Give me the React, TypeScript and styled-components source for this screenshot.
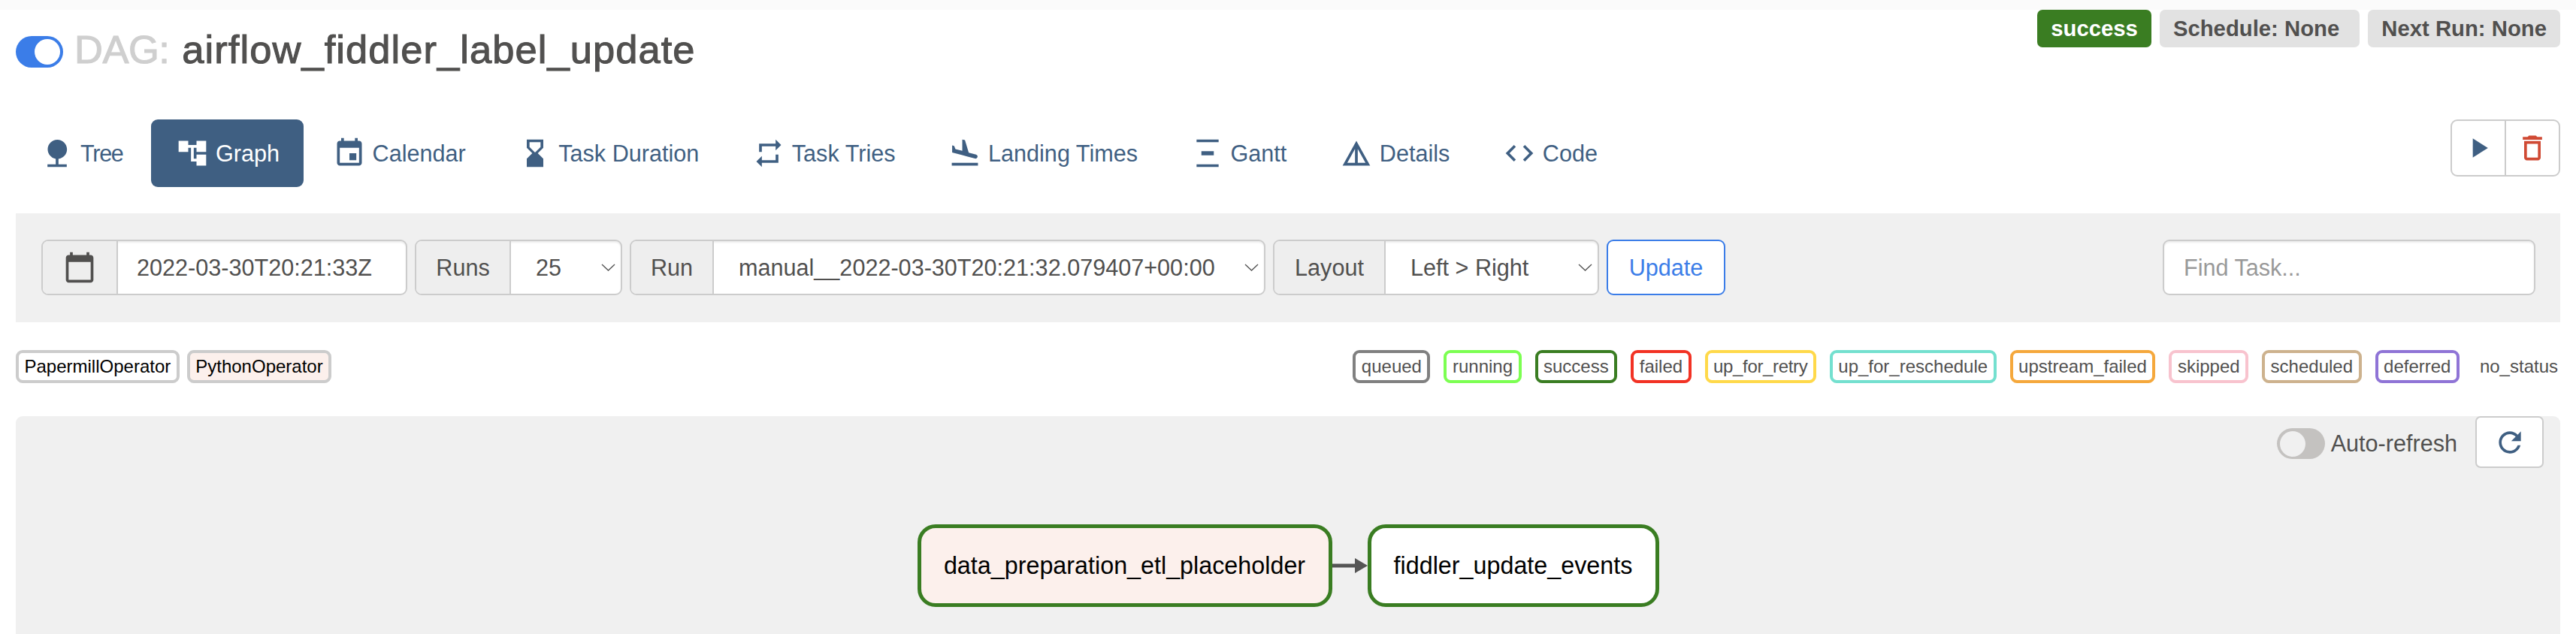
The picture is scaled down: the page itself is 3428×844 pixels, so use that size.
import React from "react";
import styled, { createGlobalStyle } from "styled-components";

const ink = "#51504f";
const navy = "#3f5f82";

const GlobalStyle = createGlobalStyle`
  html, body {
    margin: 0;
    background: #fff;
  }
  body {
    width: 3428px;
    height: 844px;
    overflow: hidden;
    font-family: "Liberation Sans", Arial, sans-serif;
    font-size: 30.6px;
    color: ${ink};
  }
`;

const Page = styled.div`
  height: 844px;
  padding: 13px 21px 0;
  box-sizing: border-box;
  display: flex;
  flex-direction: column;
  overflow: hidden;
`;

const TopStrip = styled.div`
  position: absolute;
  top: 0;
  left: 0;
  width: 100%;
  height: 13px;
  background: #fbfbfb;
`;

const Header = styled.header`
  display: flex;
  justify-content: space-between;
  align-items: flex-start;
  height: 146px;
`;

const TitleRow = styled.div`
  display: flex;
  align-items: center;
  margin-top: 35px;
  height: 42px;
`;

const Switch = styled.span<{ $on?: boolean }>`
  width: ${({ $on }) => ($on ? 63 : 64)}px;
  height: ${({ $on }) => ($on ? 42 : 41)}px;
  flex: none;
  border-radius: 21px;
  background: ${({ $on }) => ($on ? "#3b7de8" : "#c4c2c0")};
  display: flex;
  align-items: center;
  justify-content: ${({ $on }) => ($on ? "flex-end" : "flex-start")};
  padding: 0 4px;
  box-sizing: border-box;

  &::after {
    content: "";
    width: 34px;
    height: 34px;
    border-radius: 50%;
    background: ${({ $on }) => ($on ? "#fff" : "#f0f0f0")};
  }
`;

const Title = styled.h4`
  margin: -6px 0 0 15px;
  font-size: 52.5px;
  font-weight: 400;
  line-height: 1;
  white-space: nowrap;
  letter-spacing: 1.05px;
  -webkit-text-stroke: 1.1px currentColor;
`;

const DagWord = styled.span`
  color: #cfcfcf;
  margin-right: 17px;
  letter-spacing: -0.5px;
`;

const Badges = styled.div`
  display: flex;
  gap: 11px;
`;

const Badge = styled.span<{ $success?: boolean; $trail?: number }>`
  height: 50px;
  padding: 0 ${({ $trail }) => 18 + ($trail ?? 0)}px 0 18px;
  display: flex;
  align-items: center;
  border-radius: 7px;
  font-size: 29.3px;
  font-weight: 700;
  background: ${({ $success }) => ($success ? "#3a7d22" : "#e2e2e2")};
  color: ${({ $success }) => ($success ? "#fff" : ink)};
`;

const NavRow = styled.nav`
  display: flex;
  justify-content: space-between;
  align-items: flex-start;
  height: 125px;
`;

const Tabs = styled.ul`
  display: flex;
  gap: 5.5px;
  margin: 0;
  padding: 0;
  list-style: none;
`;

const Tab = styled.li<{ $active?: boolean; $tight?: boolean }>`
  height: 90px;
  padding: 0 32px 0 33px;
  display: flex;
  align-items: center;
  gap: 9px;
  border-radius: 9px;
  white-space: nowrap;
  letter-spacing: ${({ $tight }) => ($tight ? "-1.3px" : "normal")};
  background: ${({ $active }) => ($active ? navy : "transparent")};
  color: ${({ $active }) => ($active ? "#fff" : navy)};
`;

const IconSvg = styled.svg<{ $size?: number }>`
  width: ${({ $size }) => $size ?? 44}px;
  height: ${({ $size }) => $size ?? 44}px;
  flex: none;
  fill: currentColor;
`;

const Icon = ({ d, size }: { d: string; size?: number }) => (
  <IconSvg viewBox="0 0 24 24" $size={size} aria-hidden="true">
    <path d={d} />
  </IconSvg>
);

const ActionGroup = styled.div`
  display: flex;
  height: 76px;
  border: 2px solid #ccc;
  border-radius: 9px;
  box-sizing: border-box;
  background: #fff;
`;

const ActionButton = styled.span<{ $danger?: boolean }>`
  width: 70px;
  display: flex;
  align-items: center;
  justify-content: center;
  color: ${({ $danger }) => ($danger ? "#d04a34" : navy)};

  & + & {
    border-left: 2px solid #ccc;
  }
`;

const FilterPanel = styled.section`
  height: 145px;
  padding: 35px 33px 0 34px;
  box-sizing: border-box;
  background: #f0f0f0;
  display: flex;
  justify-content: space-between;
`;

const Controls = styled.div`
  display: flex;
  gap: 10px;
`;

const InputGroup = styled.div<{ $width: number }>`
  width: ${({ $width }) => $width}px;
  height: 74px;
  box-sizing: border-box;
  display: flex;
  align-items: center;
  border: 2px solid #ccc;
  border-radius: 9px;
  background: #fff;
  box-shadow: inset 0 2px 2px rgba(0, 0, 0, 0.075);
  overflow: hidden;
`;

const Addon = styled.span<{ $width: number }>`
  width: ${({ $width }) => $width}px;
  height: 100%;
  flex: none;
  box-sizing: border-box;
  display: flex;
  align-items: center;
  justify-content: center;
  background: #eee;
  border-right: 2px solid #ccc;
`;

const FieldValue = styled.span<{ $pad: number }>`
  flex: 1;
  padding-left: ${({ $pad }) => $pad}px;
  white-space: nowrap;
`;

const Caret = styled.svg`
  width: 19px;
  height: 10px;
  flex: none;
  margin-right: 7px;
  fill: none;
  stroke: #555;
  stroke-width: 1.4;
`;

const SelectCaret = () => (
  <Caret viewBox="0 0 19 10" aria-hidden="true">
    <path d="M1 1l8.5 8L18 1" />
  </Caret>
);

const UpdateButton = styled.span`
  width: 158px;
  height: 74px;
  box-sizing: border-box;
  display: flex;
  align-items: center;
  justify-content: center;
  border: 2px solid #3b7de8;
  border-radius: 9px;
  background: #fff;
  color: #3b7de8;
`;

const FindTask = styled.div`
  width: 496px;
  height: 74px;
  box-sizing: border-box;
  padding-left: 26px;
  display: flex;
  align-items: center;
  border: 2px solid #ccc;
  border-radius: 9px;
  background: #fff;
  box-shadow: inset 0 2px 2px rgba(0, 0, 0, 0.075);
  color: #999;
`;

const LegendRow = styled.div`
  height: 125px;
  padding-top: 37px;
  box-sizing: border-box;
  display: flex;
  justify-content: space-between;
  align-items: flex-start;
`;

const LegendGroup = styled.div<{ $gap: number }>`
  display: flex;
  align-items: center;
  gap: ${({ $gap }) => $gap}px;
`;

const LegendItem = styled.span<{ $border?: string; $bg?: string; $dark?: boolean; $tight?: boolean }>`
  height: 44px;
  padding: 0 7.5px;
  box-sizing: border-box;
  display: flex;
  align-items: center;
  border: 4px solid ${({ $border }) => $border ?? "#ccc"};
  border-radius: 9px;
  font-size: 24px;
  letter-spacing: ${({ $tight }) => ($tight ? "-0.35px" : "normal")};
  background: ${({ $bg }) => $bg ?? "#fff"};
  color: ${({ $dark }) => ($dark ? "#000" : ink)};
`;

const PlainStatus = styled.span`
  font-size: 24px;
  margin: 0 3px 0 9px;
`;

const GraphPanel = styled.section`
  flex: 1;
  background: #f0f0f0;
  border-radius: 9px 9px 0 0;
  position: relative;
  display: flex;
  justify-content: center;
  padding: 144px 0 0 0;
  box-sizing: border-box;
`;

const RefreshBar = styled.div`
  position: absolute;
  top: 0;
  right: 22px;
  display: flex;
  align-items: flex-start;
`;

const AutoRefresh = styled.label`
  display: flex;
  align-items: center;
  gap: 8px;
  margin: 16px 24px 0 0;
`;

const RefreshButton = styled.span`
  width: 91px;
  height: 69px;
  box-sizing: border-box;
  display: flex;
  align-items: center;
  justify-content: center;
  border: 2px solid #ccc;
  border-radius: 7px;
  background: #fff;
  color: ${navy};
`;

const GraphRow = styled.div`
  display: flex;
  align-items: flex-start;
`;

const TaskNode = styled.div<{ $bg?: string; $width: number }>`
  width: ${({ $width }) => $width}px;
  height: 110px;
  box-sizing: border-box;
  display: flex;
  align-items: center;
  justify-content: center;
  border: 5px solid #3a7d22;
  border-radius: 24px;
  font-size: 32.3px;
  background: ${({ $bg }) => $bg ?? "#fff"};
  color: #000;
  white-space: nowrap;
`;

const EdgeArrow = styled.svg`
  width: 47px;
  height: 20px;
  flex: none;
  margin-top: 45px;
`;

const tabs = [
  { label: "Tree", tight: true, d: "M13 16.12c3.47-.41 6.17-3.36 6.17-6.95 0-3.87-3.13-7-7-7s-7 3.13-7 7c0 3.47 2.52 6.34 5.83 6.89V20H5v2h14v-2h-6v-3.88z" },
  { label: "Graph", active: true, d: "M22 11V3h-7v3H9V3H2v8h7V8h2v10h4v3h7v-8h-7v3h-2V8h2v3z" },
  { label: "Calendar", d: "M17 12h-5v5h5v-5zM16 1v2H8V1H6v2H5c-1.11 0-1.99.9-1.99 2L3 19c0 1.1.89 2 2 2h14c1.1 0 2-.9 2-2V5c0-1.1-.9-2-2-2h-1V1h-2zm3 18H5V8h14v11z" },
  { label: "Task Duration", d: "M18 22l-.01-6L14 12l3.99-4.01L18 2H6v6l4 4-4 3.99V22h12zM8 7.5V4h8v3.5l-4 4-4-4z" },
  { label: "Task Tries", d: "M7 7h10v3l4-4-4-4v3H5v6h2V7zm10 10H7v-3l-4 4 4 4v-3h12v-6h-2v4z" },
  { label: "Landing Times", d: "M2.5 19h19v2h-19v-2zm7.18-5.73l4.35 1.16 5.31 1.42c.8.21 1.62-.26 1.84-1.06.21-.8-.26-1.62-1.06-1.84l-5.31-1.42-2.76-9.02L10.12 2v8.28L5.15 8.95l-.93-2.32-1.45-.39v5.17l1.6.43 5.31 1.43z" },
  { label: "Gantt", d: "M4 2h16v2H4zM4 20h16v2H4zM7.5 10.5h9v3h-9z" },
  { label: "Details", d: "M12 3L2 21h20L12 3zm1 5.92L18.6 19H13V8.92zm-2 0V19H5.4L11 8.92z" },
  { label: "Code", d: "M9.4 16.6L4.8 12l4.6-4.6L8 6l-6 6 6 6 1.4-1.4zm5.2 0l4.6-4.6-4.6-4.6L16 6l6 6-6 6-1.4-1.4z" },
];

const statuses = [
  { label: "queued", color: "#808080" },
  { label: "running", color: "#7cff52" },
  { label: "success", color: "#3a7d22" },
  { label: "failed", color: "#f23224" },
  { label: "up_for_retry", color: "#ffd94a", tight: true },
  { label: "up_for_reschedule", color: "#74e0cf" },
  { label: "upstream_failed", color: "#f5a83c" },
  { label: "skipped", color: "#f8c3ce" },
  { label: "scheduled", color: "#cdb28e" },
  { label: "deferred", color: "#8f74d6" },
];

const CALENDAR = "M20 3h-1V1h-2v2H7V1H5v2H4c-1.1 0-2 .9-2 2v16c0 1.1.9 2 2 2h16c1.1 0 2-.9 2-2V5c0-1.1-.9-2-2-2zm0 18H4V8h16v13z";
const PLAY = "M8 5v14l11-7z";
const TRASH = "M6 19c0 1.1.9 2 2 2h8c1.1 0 2-.9 2-2V7H6v12zM8 9h8v10H8V9zm7.5-5l-1-1h-5l-1 1H5v2h14V4z";
const REFRESH = "M17.65 6.35C16.2 4.9 14.21 4 12 4c-4.42 0-7.99 3.58-7.99 8s3.57 8 7.99 8c3.73 0 6.84-2.55 7.73-6h-2.08c-.82 2.33-3.04 4-5.65 4-3.31 0-6-2.69-6-6s2.69-6 6-6c1.66 0 3.14.69 4.22 1.78L13 11h7V4l-2.35 2.35z";

export default function App() {
  return (
    <>
      <GlobalStyle />
      <TopStrip />
      <Page>
        <Header>
          <TitleRow>
            <Switch $on />
            <Title>
              <DagWord>DAG:</DagWord>
              airflow_fiddler_label_update
            </Title>
          </TitleRow>
          <Badges>
            <Badge $success>success</Badge>
            <Badge $trail={9}>Schedule: None</Badge>
            <Badge>Next Run: None</Badge>
          </Badges>
        </Header>

        <NavRow>
          <Tabs>
            {tabs.map((tab) => (
              <Tab key={tab.label} $active={tab.active} $tight={tab.tight}>
                <Icon d={tab.d} />
                {tab.label}
              </Tab>
            ))}
          </Tabs>
          <ActionGroup>
            <ActionButton>
              <Icon d={PLAY} />
            </ActionButton>
            <ActionButton $danger>
              <Icon d={TRASH} />
            </ActionButton>
          </ActionGroup>
        </NavRow>

        <FilterPanel>
          <Controls>
            <InputGroup $width={487}>
              <Addon $width={100}>
                <Icon d={CALENDAR} />
              </Addon>
              <FieldValue $pad={25}>2022-03-30T20:21:33Z</FieldValue>
            </InputGroup>
            <InputGroup $width={276}>
              <Addon $width={126}>Runs</Addon>
              <FieldValue $pad={33}>25</FieldValue>
              <SelectCaret />
            </InputGroup>
            <InputGroup $width={846}>
              <Addon $width={110}>Run</Addon>
              <FieldValue $pad={33}>manual__2022-03-30T20:21:32.079407+00:00</FieldValue>
              <SelectCaret />
            </InputGroup>
            <InputGroup $width={434}>
              <Addon $width={148}>Layout</Addon>
              <FieldValue $pad={33}>Left &gt; Right</FieldValue>
              <SelectCaret />
            </InputGroup>
            <UpdateButton>Update</UpdateButton>
          </Controls>
          <FindTask>Find Task...</FindTask>
        </FilterPanel>

        <LegendRow>
          <LegendGroup $gap={10}>
            <LegendItem $dark>PapermillOperator</LegendItem>
            <LegendItem $dark $bg="#fcf0ec">PythonOperator</LegendItem>
          </LegendGroup>
          <LegendGroup $gap={18}>
            {statuses.map((status) => (
              <LegendItem key={status.label} $border={status.color} $tight={status.tight}>
                {status.label}
              </LegendItem>
            ))}
            <PlainStatus>no_status</PlainStatus>
          </LegendGroup>
        </LegendRow>

        <GraphPanel>
          <RefreshBar>
            <AutoRefresh>
              <Switch />
              Auto-refresh
            </AutoRefresh>
            <RefreshButton>
              <Icon d={REFRESH} />
            </RefreshButton>
          </RefreshBar>
          <GraphRow>
            <TaskNode $bg="#fcf0ec" $width={552}>data_preparation_etl_placeholder</TaskNode>
            <EdgeArrow viewBox="0 0 47 20" aria-hidden="true">
              <path d="M0 7.5h31v5H0z" fill="#555" />
              <path d="M30 0l17 10-17 10z" fill="#555" />
            </EdgeArrow>
            <TaskNode $width={388}>fiddler_update_events</TaskNode>
          </GraphRow>
        </GraphPanel>
      </Page>
    </>
  );
}
